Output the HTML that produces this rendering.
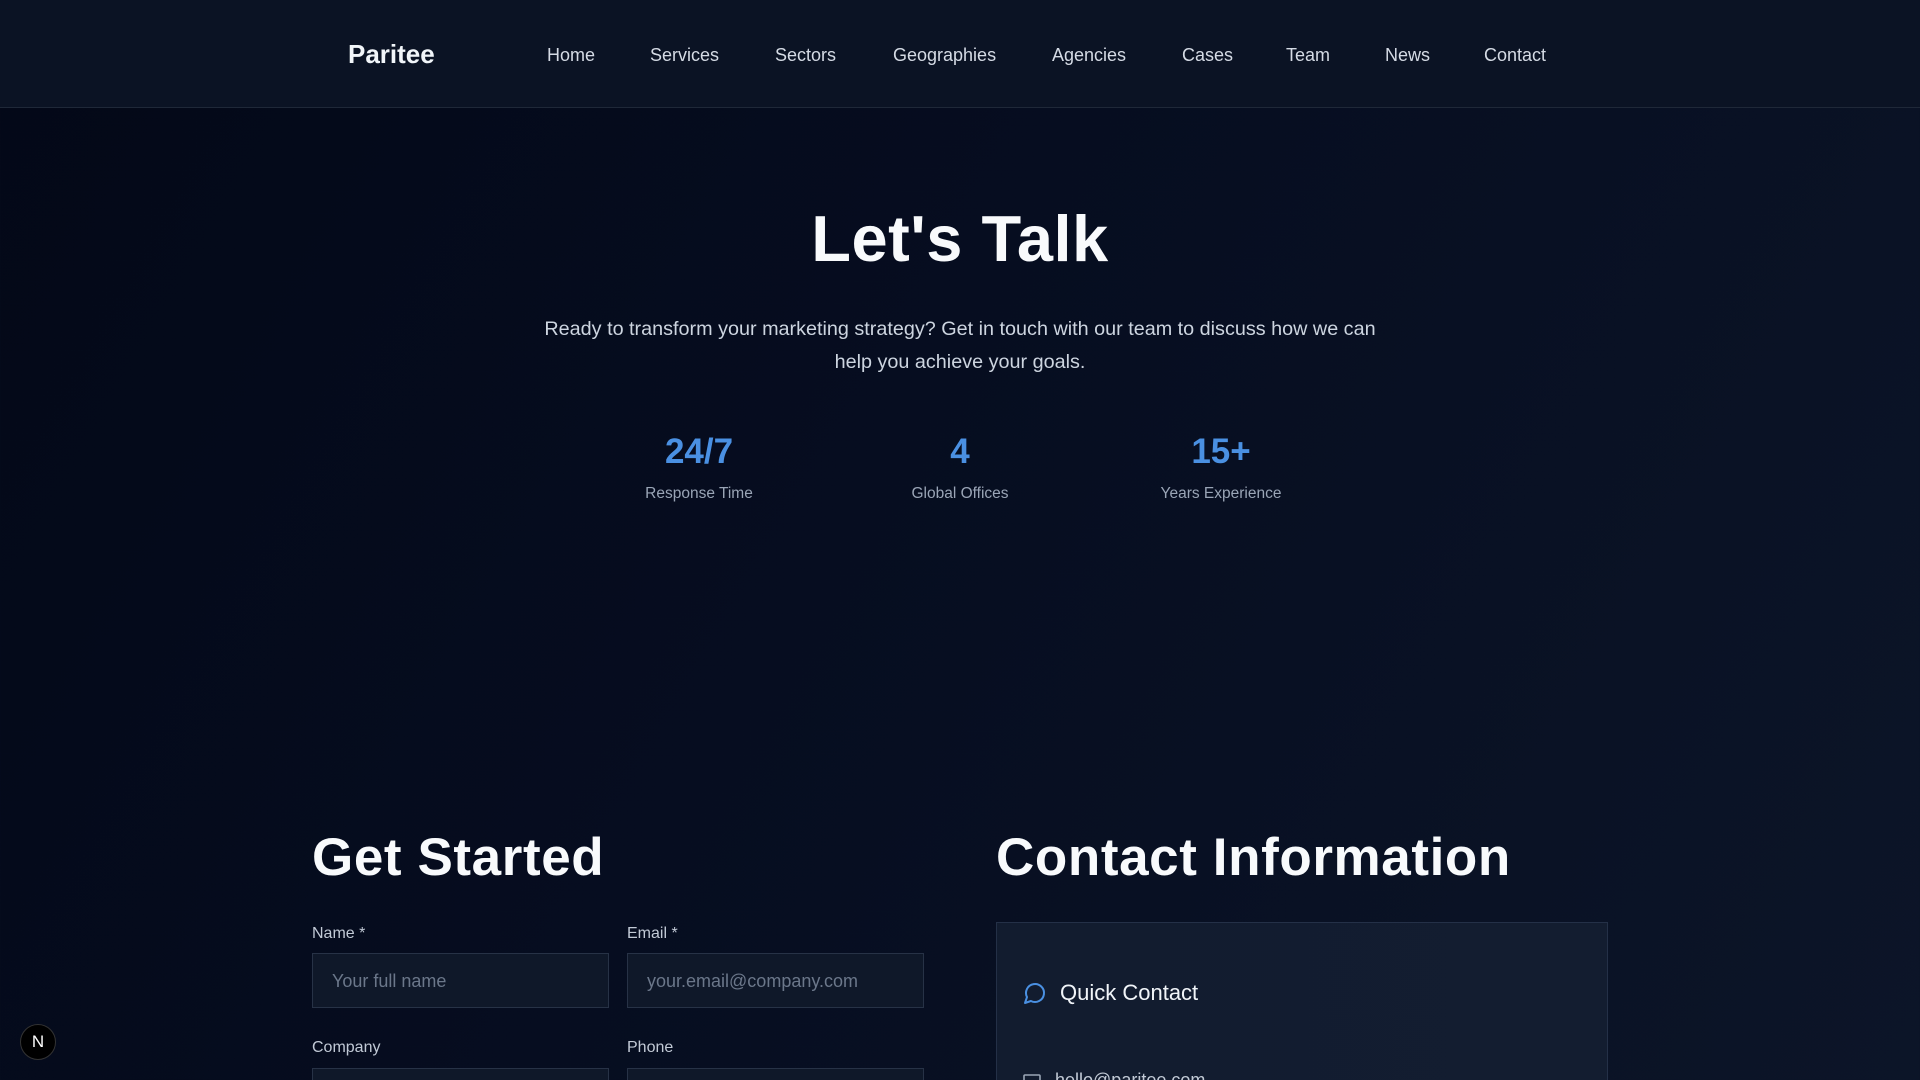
<!DOCTYPE html>
<html style="overflow:hidden;height:1080px"><head><meta charset="utf-8"><style>
*{margin:0;padding:0;box-sizing:border-box}
body{width:1920px;height:1080px;overflow:hidden;font-family:"Liberation Sans",sans-serif;color:#fff;
background:linear-gradient(120deg,#030817 0%,#060d20 45%,#0c1528 100%);position:relative}
nav{position:absolute;left:0;top:0;width:1920px;height:108px;background:#0b1324;border-bottom:1px solid #1f2838}
.logo{position:absolute;left:348px;top:39px;font-size:26px;font-weight:bold;color:#f1f5f9}
.nl{position:absolute;top:45px;font-size:18px;color:#d5dbe5}
h1{position:absolute;left:0;width:1920px;top:201px;text-align:center;font-size:65px;font-weight:bold;letter-spacing:0.5px;color:#f8fafc}
.p{position:absolute;left:0;width:1920px;top:313px;text-align:center;font-size:19.8px;line-height:33px;color:#cdd5e0}
.st{position:absolute;top:432px;width:240px;text-align:center}
.st b{display:block;font-size:35px;color:#4a90e2;height:46px}
.st span{display:block;font-size:15.5px;color:#9aa5b6;margin-top:7px}
h2{position:absolute;top:827px;font-size:53px;font-weight:bold;letter-spacing:0.6px;color:#f8fafc}
.lb{position:absolute;font-size:16px;color:#c2cad6}
.in{position:absolute;width:297px;height:55px;background:#0f1829;border:1px solid #273246;font-size:18px;color:#6b778a;padding:17px 0 0 19px}
.card{position:absolute;left:996px;top:922px;width:612px;height:158px;background:linear-gradient(90deg,#121c2f,#131d30);border:1px solid #243047;border-bottom:none;overflow:hidden}
</style></head><body>
<nav>
<div class="logo">Paritee</div>
<div class="nl" style="left:547px">Home</div>
<div class="nl" style="left:650px">Services</div>
<div class="nl" style="left:775px">Sectors</div>
<div class="nl" style="left:893px">Geographies</div>
<div class="nl" style="left:1052px">Agencies</div>
<div class="nl" style="left:1182px">Cases</div>
<div class="nl" style="left:1286px">Team</div>
<div class="nl" style="left:1385px">News</div>
<div class="nl" style="left:1484px">Contact</div>
</nav>
<h1>Let's Talk</h1>
<div class="p">Ready to transform your marketing strategy? Get in touch with our team to discuss how we can<br>help you achieve your goals.</div>
<div class="st" style="left:579px"><b>24/7</b><span>Response Time</span></div>
<div class="st" style="left:840px"><b>4</b><span>Global Offices</span></div>
<div class="st" style="left:1101px"><b>15+</b><span>Years Experience</span></div>
<h2 style="left:312px">Get Started</h2>
<h2 style="left:996px">Contact Information</h2>
<div class="lb" style="left:312px;top:925px">Name *</div>
<div class="lb" style="left:627px;top:925px">Email *</div>
<div class="in" style="left:312px;top:953px">Your full name</div>
<div class="in" style="left:627px;top:953px">your.email@company.com</div>
<div class="lb" style="left:312px;top:1039px">Company</div>
<div class="lb" style="left:627px;top:1039px">Phone</div>
<div class="in" style="left:312px;top:1068px;height:12px;border-bottom:none"></div>
<div class="in" style="left:627px;top:1068px;height:12px;border-bottom:none"></div>
<div class="card">
<svg style="position:absolute;left:26px;top:58px" width="24" height="24" viewBox="0 0 24 24" fill="none" stroke="#4a90e2" stroke-width="2" stroke-linecap="round" stroke-linejoin="round"><path d="M7.9 20A9 9 0 1 0 4 16.1L2 22Z"/></svg>
<div style="position:absolute;left:63px;top:57px;font-size:22px;color:#f1f5f9">Quick Contact</div>
<svg style="position:absolute;left:26px;top:151px" width="18" height="14" viewBox="0 0 18 14" fill="none" stroke="#9aa5b6" stroke-width="1.6"><rect x="1" y="1" width="16" height="12" rx="1"/></svg>
<div style="position:absolute;left:58px;top:147px;font-size:18px;color:#c2cad6">hello@paritee.com</div>
</div>
<div style="position:absolute;left:20px;top:1024px;width:36px;height:36px;border-radius:50%;background:#000;border:1px solid #333;color:#fff;font-size:17px;text-align:center;line-height:34px">N</div>
</body></html>
